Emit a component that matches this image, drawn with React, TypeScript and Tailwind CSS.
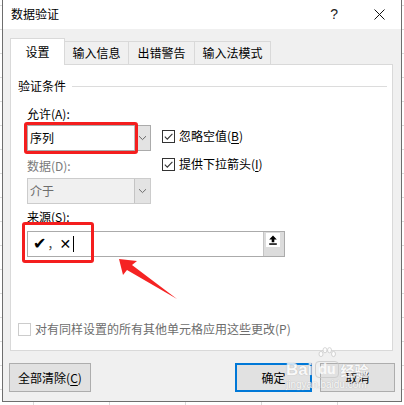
import React from "react";

function Check() {
  return (
    <div className="w-[13px] h-[13px] border border-[#333333] bg-white flex items-center justify-center shrink-0">
      <svg width="11" height="11" viewBox="0 0 11 11">
        <path d="M1.8 5.6 L4.3 8.1 L9.4 2.8" fill="none" stroke="#333333" strokeWidth="1.1" />
      </svg>
    </div>
  );
}

function Chevron({ color }: { color: string }) {
  return (
    <svg width="9" height="6" viewBox="0 0 9 6">
      <path d="M1 1.2 L4.5 4.6 L8 1.2" fill="none" stroke={color} strokeWidth="1" />
    </svg>
  );
}

export default function App() {
  return (
    <div className="relative w-[404px] h-[405px] overflow-hidden bg-white bg-[linear-gradient(#dadada_1px,transparent_1px),linear-gradient(90deg,#dadada_1px,transparent_1px)] bg-[size:76px_24px] bg-[position:33px_5px] font-['Noto_Sans_CJK_SC','Microsoft_YaHei',sans-serif] text-[12px] text-black">
      <div className="ml-[2px] w-[400px] h-[402px] flex flex-col border-x border-b border-[#6e6e6e] bg-[#f0f0f0]">
        {/* title bar */}
        <div className="h-[29px] bg-white flex items-center pl-[8px] pr-[16px] shrink-0">
          <span className="leading-[14px] mt-[-1px]">数据验证</span>
          <span className="ml-auto font-['Liberation_Sans',sans-serif] text-[14px] leading-[14px] text-[#222] mt-[-1px]">?</span>
          <svg className="ml-[36px]" width="11" height="11" viewBox="0 0 11 11">
            <path d="M0.5 0.5 L10.5 10.5 M10.5 0.5 L0.5 10.5" stroke="#111" strokeWidth="1" />
          </svg>
        </div>

        {/* tabs */}
        <div className="h-[35px] pt-[9px] pl-[7px] flex items-end shrink-0">
          <div className="relative z-10 w-[55px] h-[27px] mb-[-1px] bg-white border border-b-0 border-[#d9d9d9] flex items-center justify-center">
            <span className="leading-[14px] mb-[1px]">设置</span>
          </div>
          <div className="w-[64px] h-[23px] border-t border-r border-[#d9d9d9] flex items-center justify-center">
            <span className="leading-[14px]">输入信息</span>
          </div>
          <div className="w-[66px] h-[23px] border-t border-r border-[#d9d9d9] flex items-center justify-center">
            <span className="leading-[14px]">出错警告</span>
          </div>
          <div className="w-[76px] h-[23px] border-t border-r border-[#d9d9d9] flex items-center justify-center">
            <span className="leading-[14px]">输入法模式</span>
          </div>
        </div>

        {/* panel */}
        <div className="ml-[7px] w-[383px] h-[287px] bg-white border border-[#d9d9d9] flex flex-col shrink-0">
          <div className="mt-[14px] h-[14px] flex items-center pl-[7px] pr-[5px]">
            <span className="leading-[14px]">验证条件</span>
            <div className="ml-[6px] flex-1 h-px bg-[#dcdcdc] mt-[1px]" />
          </div>

          <div className="pl-[16px] flex flex-col">
            <div className="mt-[13px] h-[16px] leading-[16px]">允许(A):</div>

            <div className="mt-[3px] flex items-start">
              <div className="w-[124px] h-[26px] flex border border-[#ababab]">
                <div className="flex-1 bg-white flex items-center pl-[2px]">
                  <span className="leading-[14px]">序列</span>
                </div>
                <div className="w-[16px] bg-[#e3e3e3] border-l border-[#bdbdbd] flex items-center justify-center">
                  <Chevron color="#666" />
                </div>
              </div>
              <div className="ml-[11px] mt-[4px] flex items-center">
                <Check />
                <span className="ml-[4px] leading-[14px]">
                  忽略空值(<span className="underline underline-offset-2">B</span>)
                </span>
              </div>
            </div>

            <div className="mt-[6px] flex items-start">
              <div className="w-[124px] mt-[1px] h-[16px] leading-[16px] text-[#7a7a7a]">数据(D):</div>
              <div className="ml-[11px] flex items-center">
                <Check />
                <span className="ml-[4px] leading-[14px]">
                  提供下拉箭头(<span className="underline underline-offset-2">I</span>)
                </span>
              </div>
            </div>

            <div className="mt-[4px] w-[124px] h-[26px] flex border border-[#cccccc]">
              <div className="flex-1 bg-[#f0f0f0] flex items-center pl-[2px]">
                <span className="leading-[14px] text-[#6d6d6d]">介于</span>
              </div>
              <div className="w-[16px] bg-[#e3e3e3] border-l border-[#c4c4c4] flex items-center justify-center">
                <Chevron color="#6d6d6d" />
              </div>
            </div>

            <div className="mt-[5px] h-[16px] leading-[16px]">来源(S):</div>

            <div className="mt-[6px] w-[258px] h-[26px] flex border border-[#ababab]">
              <div className="flex-1 bg-white flex items-center pl-[5px]">
                <span className="font-['DejaVu_Sans',sans-serif] text-[16px] leading-[16px]">✔</span>
                <span className="ml-[1px] text-[12px] leading-[14px] text-[#444]">，</span>
                <span className="font-['DejaVu_Sans',sans-serif] font-bold text-[14px] leading-[16px]">✕</span>
                <div className="ml-[2px] w-px h-[16px] bg-black" />
              </div>
              <div className="w-[21px] bg-[#dcdcdc] border-l border-[#c4c4c4] pt-[1px] pl-[2px]">
                <div className="w-[14px] h-[14px] bg-white flex items-center justify-center">
                  <svg width="12" height="12" viewBox="0 0 12 12">
                    <path d="M6 1.5 L9.8 5.5 L7.3 5.5 L7.3 8.2 L4.7 8.2 L4.7 5.5 L2.2 5.5 Z" fill="#000" />
                    <rect x="2.2" y="9.3" width="7.6" height="1.5" fill="#000" />
                  </svg>
                </div>
              </div>
            </div>
          </div>

          <div className="mt-auto mb-[13px] h-[16px] pl-[7px] flex items-center">
            <div className="w-[13px] h-[13px] border border-[#cccccc] bg-white" />
            <span className="ml-[4px] leading-[14px] text-[#6d6d6d]">对有同样设置的所有其他单元格应用这些更改(P)</span>
          </div>
        </div>

        {/* buttons */}
        <div className="mt-[12px] h-[29px] flex pl-[6px] pr-[6px] shrink-0">
          <div className="w-[82px] h-full bg-[#e1e1e1] border border-[#adadad] flex items-center justify-center">
            <span className="leading-[14px]">
              全部清除(<span className="underline underline-offset-2">C</span>)
            </span>
          </div>
          <div className="ml-auto w-[77px] h-full bg-[#e1e1e1] border-2 border-[#0078d7] flex items-center justify-center">
            <span className="leading-[14px]">确定</span>
          </div>
          <div className="ml-[8px] w-[75px] h-full bg-[#e1e1e1] border border-[#adadad] flex items-center justify-center">
            <span className="leading-[14px]">取消</span>
          </div>
        </div>
      </div>

      {/* red annotation boxes */}
      <div className="absolute left-[24px] top-[122px] w-[114px] h-[32px] border-[3px] border-[#f41e1e] rounded-[3px]" />
      <div className="absolute left-[22px] top-[222px] w-[72px] h-[41px] border-[3px] border-[#f41e1e] rounded-[3px]" />

      {/* red arrow */}
      <svg className="absolute left-[115px] top-[255px]" width="66" height="48" viewBox="0 0 66 48">
        <polygon points="4,4 22,6 17,10 62,44 12,15 8,20" fill="#f52323" />
      </svg>

      {/* watermark */}
      <div className="absolute left-[286px] top-[348px] flex flex-col items-start opacity-80 pointer-events-none">
        <div className="flex items-end h-[30px]">
          <span className="font-['Liberation_Sans',sans-serif] font-bold text-[17px] leading-[17px] text-white [text-shadow:0_0_1px_#b5b5b5,0_0_1px_#b5b5b5]">Bai</span>
          <div className="relative ml-[3px] flex flex-col items-center">
            <svg width="20" height="13" viewBox="0 0 20 13" className="mb-[1px]">
              <g fill="#fff" stroke="#c2c2c2" strokeWidth="0.8">
                <ellipse cx="4" cy="7" rx="2" ry="2.6" />
                <ellipse cx="8" cy="3.2" rx="2" ry="2.6" />
                <ellipse cx="12.5" cy="3.2" rx="2" ry="2.6" />
                <ellipse cx="16.5" cy="7" rx="2" ry="2.6" />
              </g>
            </svg>
            <span className="font-['Liberation_Sans',sans-serif] font-bold text-[14px] leading-[15px] px-[2px] rounded-[4px] text-white border border-[#c9c9c9]">du</span>
          </div>
          <span className="ml-[2px] text-[14px] leading-[15px] font-bold text-white [text-shadow:0_0_1px_#b5b5b5,0_0_1px_#b5b5b5]">经验</span>
        </div>
        <span className="mt-[2px] font-['Liberation_Sans',sans-serif] text-[10px] leading-[10px] text-white [text-shadow:0_0_1px_#b5b5b5,0_0_1px_#b5b5b5]">jingyan.baidu.com</span>
      </div>
    </div>
  );
}
